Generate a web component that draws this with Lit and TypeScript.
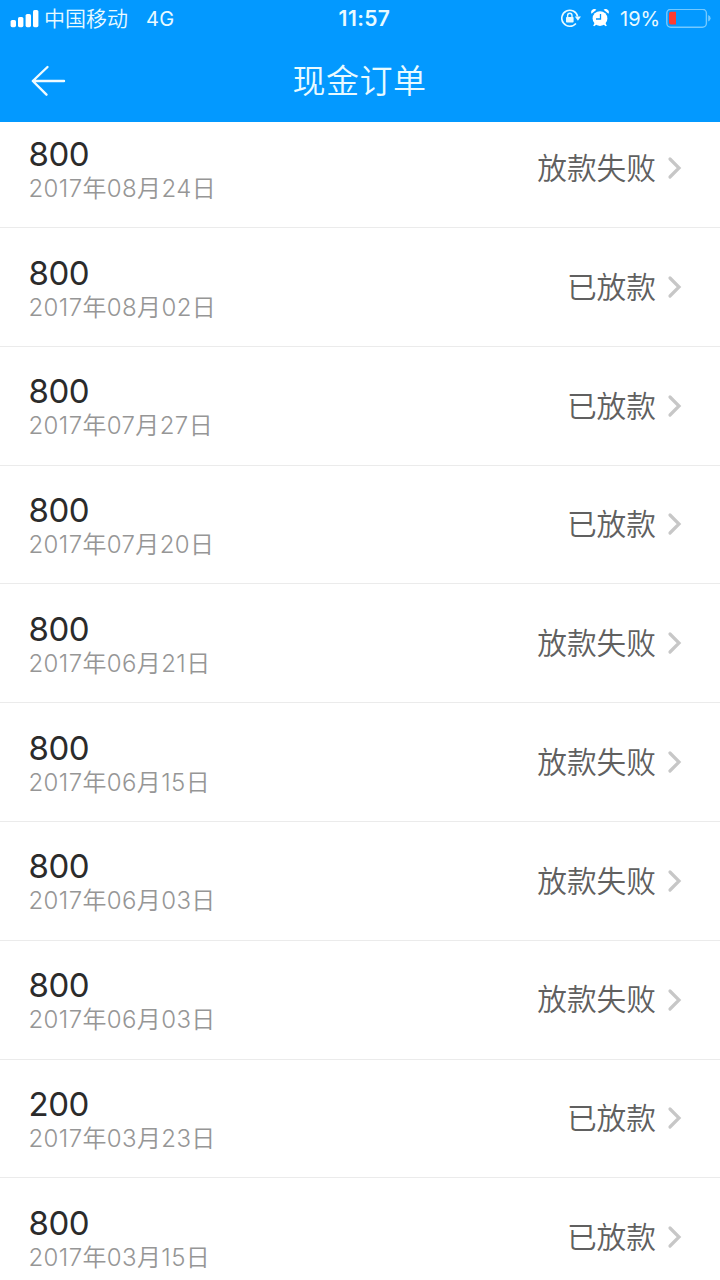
import { LitElement, html, css } from "lit";
import { customElement, property } from "lit/decorators.js";

const orders = [
  ["800", "2017年08月24日", "放款失败"],
  ["800", "2017年08月02日", "已放款"],
  ["800", "2017年07月27日", "已放款"],
  ["800", "2017年07月20日", "已放款"],
  ["800", "2017年06月21日", "放款失败"],
  ["800", "2017年06月15日", "放款失败"],
  ["800", "2017年06月03日", "放款失败"],
  ["800", "2017年06月03日", "放款失败"],
  ["200", "2017年03月23日", "已放款"],
  ["800", "2017年03月15日", "已放款"],
];

@customElement("status-bar")
class StatusBar extends LitElement {
  static styles = css`
    :host { display: grid; grid-template-columns: 1fr auto 1fr; align-items: center; height: 37px; color: #e9faff; }
    .left, .right { display: flex; align-items: center; }
    .left { padding-left: 10px; }
    .right { justify-content: flex-end; padding-right: 9px; }
    svg { display: block; flex: none; }
    .carrier { font-size: 21px; margin-left: 5px; line-height: 30px; font-weight: 350; }
    .net { font-size: 20px; margin-left: 18px; letter-spacing: 0.3px; }
    .time { font-size: 21px; font-weight: 600; letter-spacing: 0.4px; padding-left: 9px; }
    .lock { margin-right: 10px; }
    .alarm { margin-right: 11px; }
    .pct { font-size: 20px; margin-right: 6px; letter-spacing: -0.1px; }
  `;
  render() {
    return html`
      <div class="left">
        <svg width="29" height="18" viewBox="0 0 29 18" fill="#fff">
          <rect x="0.6" y="10" width="5.4" height="7.2" rx="1.6"/>
          <rect x="8" y="7" width="5.4" height="10.2" rx="1.6"/>
          <rect x="15.6" y="4" width="5.4" height="13.2" rx="1.6"/>
          <rect x="23" y="0" width="5.4" height="17.2" rx="1.6"/>
        </svg>
        <span class="carrier">中国移动</span><span class="net">4G</span>
      </div>
      <div class="time">11:57</div>
      <div class="right">
        <svg class="lock" width="20" height="20" viewBox="0 0 20 20" fill="none" stroke="#e9faff">
          <path d="M14.900 14.400A8 8 0 1 1 16.600 7.500" stroke-width="1.600"/>
          <path d="M13.800 7.500h6.200l-3.100 4.300z" fill="#e9faff" stroke="none"/>
          <rect x="5" y="8" width="7.600" height="5.600" rx=".8" fill="#e9faff" stroke="none"/>
          <path d="M6.600 8.400V6.600a2.200 2.400 0 0 1 4.400 0V8.400" stroke-width="1.400"/>
        </svg>
        <svg class="alarm" width="18" height="20" viewBox="0 0 18 20" fill="#fff">
          <circle cx="9" cy="9.600" r="7.400"/>
          <path d="M.5 4.700A3.200 3.200 0 0 1 5.400.8zM17.500 4.700A3.200 3.200 0 0 0 12.600.8zM3.600 14L2.200 16.700l1 .6 2.700-2zM14.400 14l1.400 2.700-1 .6-2.700-2z"/>
          <path d="M9.500 5v5H5" fill="none" stroke="#0399ff" stroke-width="1.300"/>
        </svg>
        <span class="pct">19%</span>
        <svg width="45" height="20" viewBox="0 0 45 20">
          <rect x=".8" y=".2" width="39.600" height="18" rx="4" fill="none" stroke="#74c9ff" stroke-width="1.400"/>
          <path d="M42.200 5.900q2.400 1 2.400 3.300t-2.400 3.300z" fill="#74c9ff"/>
          <path d="M10 2.800v12.800H5a2 2 0 0 1-2-2V4.800a2 2 0 0 1 2-2z" fill="#ff3b30"/>
        </svg>
      </div>`;
  }
}

@customElement("nav-header")
class NavHeader extends LitElement {
  static styles = css`
    :host { display: grid; grid-template-columns: 100px 1fr 100px; align-items: center; height: 85px; color: #e9faff; }
    svg { display: block; margin-left: 31px; margin-top: 3px; }
    .title { text-align: center; font-size: 33px; line-height: 48px; letter-spacing: 0.5px; font-weight: 350; padding: 2px 1px 0 0; }
  `;
  render() {
    return html`
      <svg width="36" height="32" viewBox="0 0 36 32" fill="none" stroke="#f0fbff" stroke-width="2.400" stroke-linecap="round" stroke-linejoin="round">
        <path d="M16.500 2L1.800 16l13.700 13.700M2 16h31"/>
      </svg>
      <div class="title">现金订单</div>`;
  }
}

@customElement("order-row")
class OrderRow extends LitElement {
  @property() amount = "";
  @property() date = "";
  @property() status = "";
  static styles = css`
    :host { display: flex; box-sizing: border-box; height: 118.8px; padding: 0 38px 0 28.500px; border-bottom: 1px solid #ebebeb; }
    .info { flex: 1; padding-top: 25.5px; }
    .amount { font-size: 33px; line-height: 38px; color: #2b2b2b; letter-spacing: -0.5px; font-weight: 380; }
    .date { font-size: 24px; line-height: 32px; color: #969696; font-weight: 350; white-space: nowrap; letter-spacing: 0.38px; }
    .state { display: flex; align-items: center; color: #606060; font-size: 29.7px; font-weight: 350; }
    .state span { padding-bottom: 3.4px; }
    svg { display: block; margin-left: 11px; }
  `;
  render() {
    return html`
      <div class="info">
        <div class="amount">${this.amount}</div>
        <div class="date">${this.date}</div>
      </div>
      <div class="state">
        <span>${this.status}</span>
        <svg width="15" height="24" viewBox="0 0 15 24" fill="none" stroke="#c7c7c7" stroke-width="3.200" stroke-linecap="round">
          <path d="M3 3l9 9L3 21"/>
        </svg>
      </div>`;
  }
}

@customElement("app-root")
class AppRoot extends LitElement {
  static styles = css`
    :host { display: flex; flex-direction: column; height: 1280px; overflow: hidden; background: #fff; font-family: Inter, "Noto Sans CJK SC", sans-serif; }
    .top { background: #0399ff; flex: none; height: 122px; }
    .list { flex: 1; overflow: hidden; min-height: 0; }
    .rows { margin-top: -12.8px; }
  `;
  render() {
    return html`
      <div class="top"><status-bar></status-bar><nav-header></nav-header></div>
      <div class="list"><div class="rows">
        ${orders.map(([a, d, s]) => html`<order-row .amount=${a} .date=${d} .status=${s}></order-row>`)}
      </div></div>`;
  }
}
